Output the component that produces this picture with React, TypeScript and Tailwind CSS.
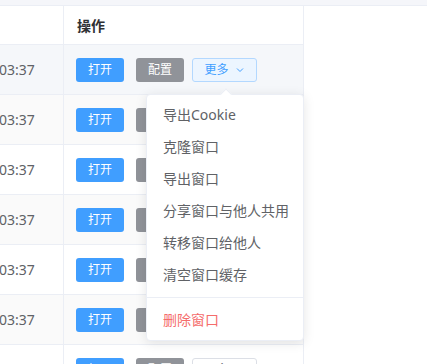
import React from 'react';

const FONT = '"Noto Sans", "Noto Sans CJK SC", sans-serif';

const ROWS = [
  { bg: 'bg-[#f5f7fa]', hover: true },
  { bg: 'bg-[#fafafa]', hover: false },
  { bg: 'bg-white', hover: false },
  { bg: 'bg-[#fafafa]', hover: false },
  { bg: 'bg-white', hover: false },
  { bg: 'bg-[#fafafa]', hover: false },
  { bg: 'bg-white', hover: false },
];

const MENU = ['导出Cookie', '克隆窗口', '导出窗口', '分享窗口与他人共用', '转移窗口给他人', '清空窗口缓存'];

function Chevron() {
  return (
    <svg width="10" height="10" viewBox="0 0 10 10" fill="none" className="ml-[6px]">
      <path d="M2 3.5 L5 6.5 L8 3.5" stroke="currentColor" strokeWidth="1" />
    </svg>
  );
}

function Row({ bg, hover }: { bg: string; hover: boolean }) {
  return (
    <div className={`flex h-[50px] border-b border-[#ebeef5] ${bg}`}>
      <div className="w-[64px] shrink-0 border-r border-[#ebeef5] flex items-center overflow-hidden">
        <span className="ml-[-1px] text-[14px] text-[#606266] whitespace-nowrap">03:37</span>
      </div>
      <div className="flex-1 flex items-center pl-[12px]">
        <button className="w-[48px] h-[24px] rounded-[3px] bg-[#409eff] text-white text-[12px] leading-none">打开</button>
        <button className="ml-[12px] w-[48px] h-[24px] rounded-[3px] bg-[#909399] text-white text-[12px] leading-none">配置</button>
        <button
          className={`ml-[8px] w-[65px] h-[24px] rounded-[3px] border text-[12px] leading-none flex items-center justify-center ${
            hover ? 'bg-[#ecf5ff] border-[#b3d8ff] text-[#409eff]' : 'bg-white border-[#dcdfe6] text-[#606266]'
          }`}
        >
          更多
          <Chevron />
        </button>
      </div>
    </div>
  );
}

export default function App() {
  return (
    <div className="relative w-[427px] h-[364px] overflow-hidden bg-white" style={{ fontFamily: FONT }}>
      <div className="h-[6px] bg-[#f5f6fa] border-b border-[#ebeef5]" />
      <div className="w-[304px] border-r border-[#ebeef5]">
        <div className="flex h-[39px] border-b border-[#ebeef5]">
          <div className="w-[64px] shrink-0 border-r border-[#ebeef5]" />
          <div className="flex-1 flex items-center pl-[13px] text-[14px] font-bold text-[#303133]">操作</div>
        </div>
        {ROWS.map((r, i) => (
          <Row key={i} bg={r.bg} hover={r.hover} />
        ))}
      </div>

      {/* dropdown menu */}
      <div className="absolute left-[146px] top-[94px] w-[158px] bg-white border border-[#ebeef5] rounded-[4px] shadow-[0_2px_12px_0_rgba(0,0,0,0.1)] py-[4px]">
        <div className="absolute left-[75px] top-[-5px] w-[8px] h-[8px] bg-white border-l border-t border-[#ebeef5] rotate-45" />
        {MENU.map((m) => (
          <div key={m} className="h-[32px] leading-[32px] px-[16px] text-[14px] text-[#606266] whitespace-nowrap">
            {m}
          </div>
        ))}
        <div className="mt-[6px] border-t border-[#ebeef5] pt-[6px]">
          <div className="h-[32px] leading-[32px] px-[16px] text-[14px] text-[#f56c6c]">删除窗口</div>
        </div>
      </div>
    </div>
  );
}
